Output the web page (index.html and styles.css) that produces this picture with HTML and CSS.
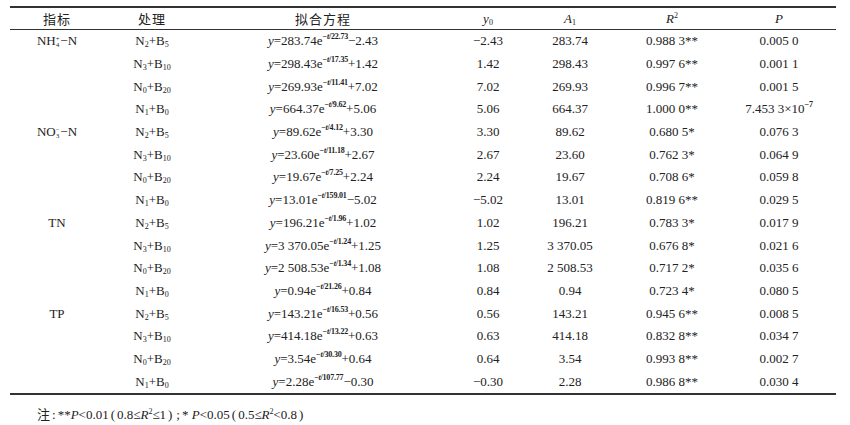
FILE: index.html
```html
<!DOCTYPE html>
<html lang="zh">
<head>
<meta charset="utf-8">
<link rel="stylesheet" href="styles.css">
</head>
<body>
<div class="wrap">
<table class="tbl">
<colgroup>
<col class="c1"><col class="c2"><col class="c3"><col class="c4"><col class="c5"><col class="c6"><col class="c7">
</colgroup>
<thead>
<tr><th class="cjk">指标</th><th class="cjk">处理</th><th class="cjk">拟合方程</th><th><i>y</i><sub>0</sub></th><th><i>A</i><sub>1</sub></th><th><i>R</i><sup>2</sup></th><th class="last"><i>P</i></th></tr>
</thead>
<tbody>
<tr><td>NH<span class="ion"><span class="up">+</span><span class="dn">4</span></span>−N</td><td>N<sub>2</sub>+B<sub>5</sub></td><td><i>y</i>=283.74e<sup>−<i>t</i>/22.73</sup>−2.43</td><td>−2.43</td><td>283.74</td><td>0.988 3**</td><td class="last">0.005 0</td></tr>
<tr><td></td><td>N<sub>3</sub>+B<sub>10</sub></td><td><i>y</i>=298.43e<sup>−<i>t</i>/17.35</sup>+1.42</td><td>1.42</td><td>298.43</td><td>0.997 6**</td><td class="last">0.001 1</td></tr>
<tr><td></td><td>N<sub>0</sub>+B<sub>20</sub></td><td><i>y</i>=269.93e<sup>−<i>t</i>/11.41</sup>+7.02</td><td>7.02</td><td>269.93</td><td>0.996 7**</td><td class="last">0.001 5</td></tr>
<tr><td></td><td>N<sub>1</sub>+B<sub>0</sub></td><td><i>y</i>=664.37e<sup>−<i>t</i>/9.62</sup>+5.06</td><td>5.06</td><td>664.37</td><td>1.000 0**</td><td class="last">7.453 3×10<sup>−7</sup></td></tr>
<tr><td>NO<span class="ion"><span class="up">−</span><span class="dn">3</span></span>−N</td><td>N<sub>2</sub>+B<sub>5</sub></td><td><i>y</i>=89.62e<sup>−<i>t</i>/4.12</sup>+3.30</td><td>3.30</td><td>89.62</td><td>0.680 5*</td><td class="last">0.076 3</td></tr>
<tr><td></td><td>N<sub>3</sub>+B<sub>10</sub></td><td><i>y</i>=23.60e<sup>−<i>t</i>/11.18</sup>+2.67</td><td>2.67</td><td>23.60</td><td>0.762 3*</td><td class="last">0.064 9</td></tr>
<tr><td></td><td>N<sub>0</sub>+B<sub>20</sub></td><td><i>y</i>=19.67e<sup>−<i>t</i>/7.25</sup>+2.24</td><td>2.24</td><td>19.67</td><td>0.708 6*</td><td class="last">0.059 8</td></tr>
<tr><td></td><td>N<sub>1</sub>+B<sub>0</sub></td><td><i>y</i>=13.01e<sup>−<i>t</i>/159.01</sup>−5.02</td><td>−5.02</td><td>13.01</td><td>0.819 6**</td><td class="last">0.029 5</td></tr>
<tr><td>TN</td><td>N<sub>2</sub>+B<sub>5</sub></td><td><i>y</i>=196.21e<sup>−<i>t</i>/1.96</sup>+1.02</td><td>1.02</td><td>196.21</td><td>0.783 3*</td><td class="last">0.017 9</td></tr>
<tr><td></td><td>N<sub>3</sub>+B<sub>10</sub></td><td><i>y</i>=3 370.05e<sup>−<i>t</i>/1.24</sup>+1.25</td><td>1.25</td><td>3 370.05</td><td>0.676 8*</td><td class="last">0.021 6</td></tr>
<tr><td></td><td>N<sub>0</sub>+B<sub>20</sub></td><td><i>y</i>=2 508.53e<sup>−<i>t</i>/1.34</sup>+1.08</td><td>1.08</td><td>2 508.53</td><td>0.717 2*</td><td class="last">0.035 6</td></tr>
<tr><td></td><td>N<sub>1</sub>+B<sub>0</sub></td><td><i>y</i>=0.94e<sup>−<i>t</i>/21.26</sup>+0.84</td><td>0.84</td><td>0.94</td><td>0.723 4*</td><td class="last">0.080 5</td></tr>
<tr><td>TP</td><td>N<sub>2</sub>+B<sub>5</sub></td><td><i>y</i>=143.21e<sup>−<i>t</i>/16.53</sup>+0.56</td><td>0.56</td><td>143.21</td><td>0.945 6**</td><td class="last">0.008 5</td></tr>
<tr><td></td><td>N<sub>3</sub>+B<sub>10</sub></td><td><i>y</i>=414.18e<sup>−<i>t</i>/13.22</sup>+0.63</td><td>0.63</td><td>414.18</td><td>0.832 8**</td><td class="last">0.034 7</td></tr>
<tr><td></td><td>N<sub>0</sub>+B<sub>20</sub></td><td><i>y</i>=3.54e<sup>−<i>t</i>/30.30</sup>+0.64</td><td>0.64</td><td>3.54</td><td>0.993 8**</td><td class="last">0.002 7</td></tr>
<tr><td></td><td>N<sub>1</sub>+B<sub>0</sub></td><td><i>y</i>=2.28e<sup>−<i>t</i>/107.77</sup>−0.30</td><td>−0.30</td><td>2.28</td><td>0.986 8**</td><td class="last">0.030 4</td></tr>
</tbody>
</table>
<p class="note"><span class="cjk">注</span><span class="p">:</span>**<i>P</i>&lt;0.01<span class="p">(</span>0.8≤<i>R</i><sup>2</sup>≤1<span class="p">)</span><span class="p">;</span>* <i>P</i>&lt;0.05<span class="p">(</span>0.5≤<i>R</i><sup>2</sup>&lt;0.8<span class="p">)</span></p>
</div>
</body>
</html>
```
FILE: styles.css
```css
html, body {
  margin: 0;
  padding: 0;
  background: #fff;
}
body {
  font-family: "Liberation Serif", "Noto Sans CJK SC", serif;
  font-size: 13px;
  color: #222;
}
.wrap {
  padding: 6px 14px 0 10px;
}
.tbl {
  width: 826px;
  border-collapse: collapse;
  table-layout: fixed;
  border-top: 2px solid #333;
  border-bottom: 2px solid #333;
}
.c1 { width: 94px; }
.c2 { width: 96px; }
.c3 { width: 246px; }
.c4 { width: 84px; }
.c5 { width: 80px; }
.c6 { width: 124px; }
.c7 { width: 102px; }
.tbl th, .tbl td {
  text-align: center;
  padding: 0;
  white-space: nowrap;
  font-weight: normal;
}
.tbl th {
  height: 21px;
  border-bottom: 1px solid #333;
}
.tbl td {
  height: 22.7px;
}
.tbl .last {
  padding-right: 12px;
}
.cjk {
  font-family: "Noto Sans CJK SC", sans-serif;
  font-weight: 300;
}
th.cjk {
  font-size: 13px;
  letter-spacing: 1px;
}
sub {
  font-size: 8px;
  vertical-align: -2px;
  line-height: 0;
}
sup {
  font-size: 8px;
  vertical-align: 5px;
  line-height: 0;
}
td sup {
  font-size: 8px;
  font-weight: 600;
  vertical-align: 6px;
  letter-spacing: -0.2px;
}
.ion {
  display: inline-block;
  vertical-align: -2px;
  font-size: 6.5px;
  line-height: 6.5px;
  margin: 0 1px 0 0;
}
.ion .up, .ion .dn {
  display: block;
  text-align: center;
}
.note {
  margin: 9px 0 0 27px;
  font-size: 13px;
}
.note .cjk {
  font-weight: 400;
}
.note .p {
  margin: 0 2px;
}
```
